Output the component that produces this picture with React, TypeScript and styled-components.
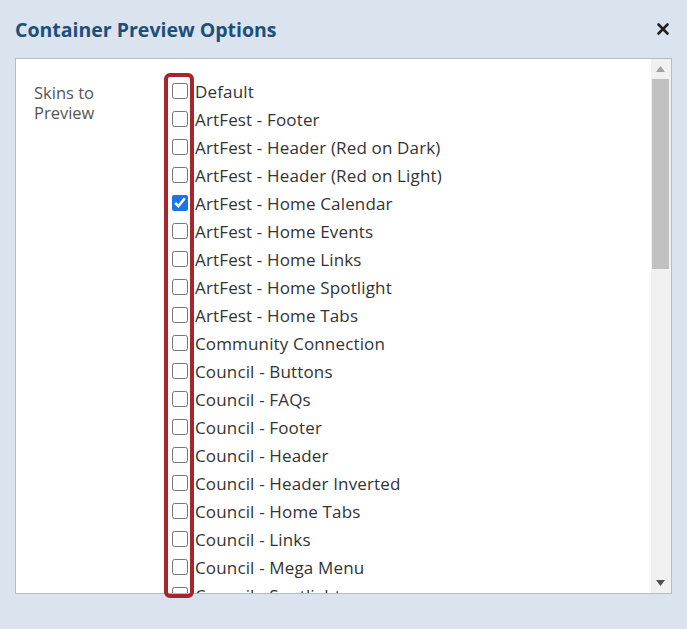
import React from "react";
import styled, { createGlobalStyle } from "styled-components";
import { X } from "lucide-react";

// ---------------------------------------------------------------------------
// Data
// ---------------------------------------------------------------------------

const SKINS: { name: string; checked?: boolean }[] = [
  { name: "Default" },
  { name: "ArtFest - Footer" },
  { name: "ArtFest - Header (Red on Dark)" },
  { name: "ArtFest - Header (Red on Light)" },
  { name: "ArtFest - Home Calendar", checked: true },
  { name: "ArtFest - Home Events" },
  { name: "ArtFest - Home Links" },
  { name: "ArtFest - Home Spotlight" },
  { name: "ArtFest - Home Tabs" },
  { name: "Community Connection" },
  { name: "Council - Buttons" },
  { name: "Council - FAQs" },
  { name: "Council - Footer" },
  { name: "Council - Header" },
  { name: "Council - Header Inverted" },
  { name: "Council - Home Tabs" },
  { name: "Council - Links" },
  { name: "Council - Mega Menu" },
  { name: "Council - Spotlight" },
];

// ---------------------------------------------------------------------------
// Styled
// ---------------------------------------------------------------------------

const Global = createGlobalStyle`
  html, body {
    margin: 0;
    padding: 0;
    background: #dae3ee;
  }
  body {
    font-family: "Open Sans", Lato, sans-serif;
  }
`;

const Dialog = styled.div`
  position: relative;
  width: 687px;
  height: 629px;
  box-sizing: border-box;
  padding: 0 15px;
  background: #dae3ee;
`;

const Header = styled.div`
  display: flex;
  align-items: center;
  justify-content: space-between;
  height: 58px;
`;

const Title = styled.h2`
  margin: 0;
  font-size: 19.5px;
  font-weight: 700;
  color: #1d4f7c;
`;

const CloseButton = styled.button`
  display: flex;
  align-items: center;
  justify-content: center;
  width: 24px;
  height: 24px;
  margin-right: -3px;
  padding: 0;
  border: none;
  background: none;
  color: #222;
  cursor: pointer;
`;

const Panel = styled.div`
  display: flex;
  height: 536px;
  box-sizing: border-box;
  background: #fff;
  border: 1px solid #b3bdca;
`;

const Content = styled.div`
  flex: 1;
  overflow: hidden;
`;

// Drawn scroll bar: the headless browser hides native ones.
const ScrollTrack = styled.div`
  display: flex;
  flex-direction: column;
  width: 20px;
  box-sizing: border-box;
  padding: 0 2px 0 1px;
  background: #f1f1f1;
`;

const ScrollArrow = styled.div<{ $dim?: boolean }>`
  display: flex;
  align-items: center;
  justify-content: center;
  height: 20px;
  color: ${(p) => (p.$dim ? "#a3a3a3" : "#505050")};
`;

const ScrollThumb = styled.div`
  height: 190px;
  background: #c1c1c1;
`;

const ScrollSpacer = styled.div`
  flex: 1;
`;

const FieldRow = styled.div`
  display: grid;
  grid-template-columns: 138px 1fr;
  padding: 18px 0 0 18px;
`;

const Label = styled.label`
  padding-top: 6px;
  font-size: 16.5px;
  line-height: 20px;
  color: #555;
  width: 90px;
`;

const List = styled.ul`
  list-style: none;
  margin: 0;
  padding: 0;
`;

const Item = styled.li`
  display: flex;
  align-items: center;
  height: 28px;
  font-size: 17px;
  letter-spacing: 0.15px;
  color: #333;
  white-space: nowrap;
`;

const Box = styled.input.attrs({ type: "checkbox" })`
  width: 16px;
  height: 16px;
  margin: 0 7px 0 0;
  accent-color: #1a73e8;
`;

const Highlight = styled.div`
  position: absolute;
  left: 164px;
  top: 73px;
  width: 30px;
  height: 525px;
  box-sizing: border-box;
  border: 4px solid #a5262c;
  border-radius: 6px;
  pointer-events: none;
`;

// ---------------------------------------------------------------------------
// Component
// ---------------------------------------------------------------------------

function Triangle({ up }: { up?: boolean }) {
  return (
    <svg width="9" height="6" viewBox="0 0 9 6" aria-hidden="true">
      <polygon points={up ? "0,6 9,6 4.5,0" : "0,0 9,0 4.5,6"} fill="currentColor" />
    </svg>
  );
}

export default function App() {
  return (
    <Dialog>
      <Global />
      <Header>
        <Title>Container Preview Options</Title>
        <CloseButton aria-label="Close">
          <X size={18} strokeWidth={3.5} />
        </CloseButton>
      </Header>

      <Panel>
        <Content>
          <FieldRow>
            <Label>Skins to Preview</Label>
            <List>
              {SKINS.map((skin) => (
                <Item key={skin.name}>
                  <Box defaultChecked={skin.checked} />
                  {skin.name}
                </Item>
              ))}
            </List>
          </FieldRow>
        </Content>
        <ScrollTrack aria-hidden="true">
          <ScrollArrow $dim>
            <Triangle up />
          </ScrollArrow>
          <ScrollThumb />
          <ScrollSpacer />
          <ScrollArrow>
            <Triangle />
          </ScrollArrow>
        </ScrollTrack>
      </Panel>

      <Highlight />
    </Dialog>
  );
}
